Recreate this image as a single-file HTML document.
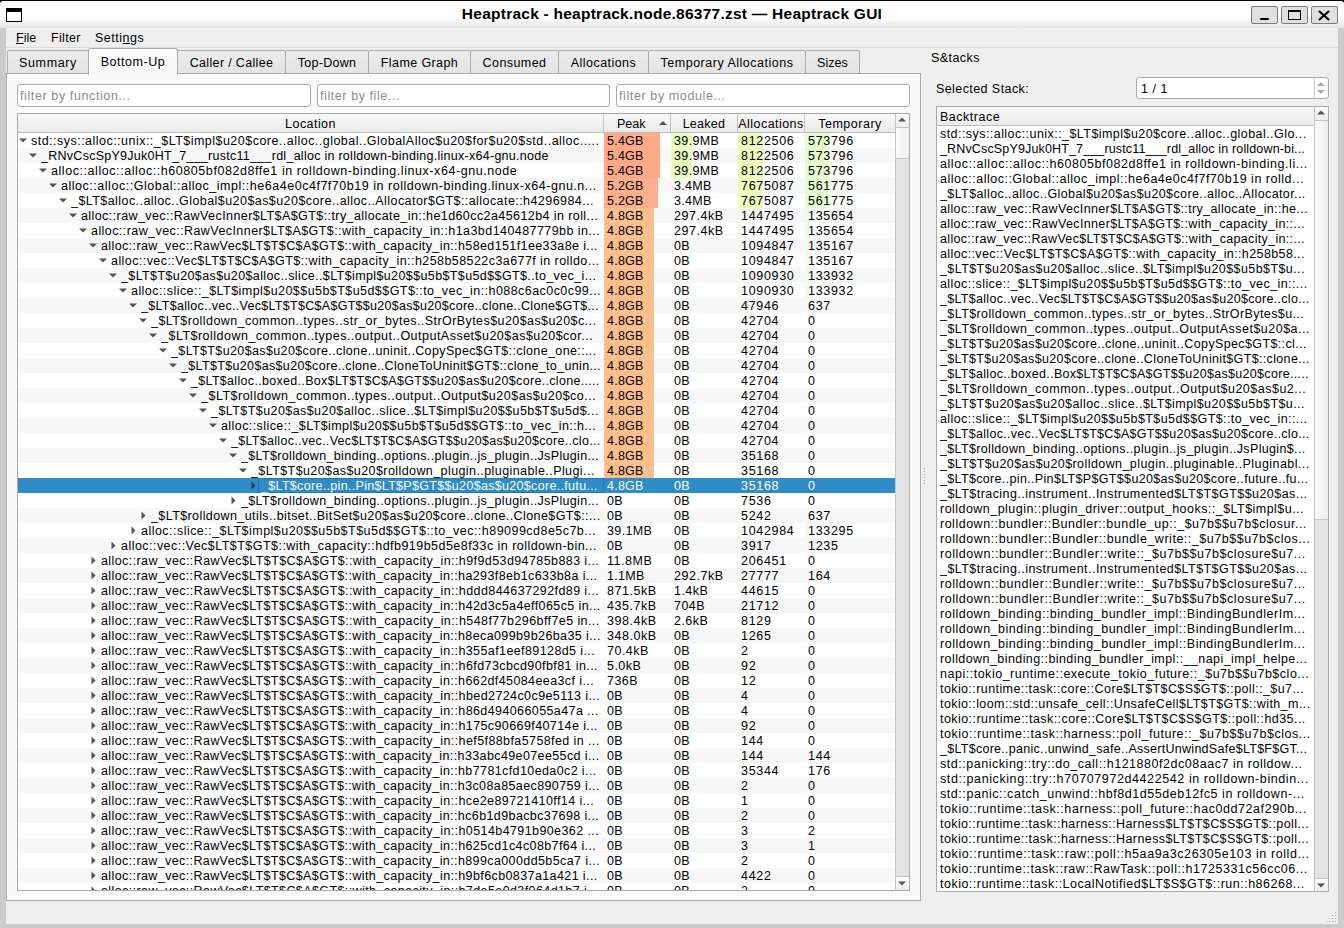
<!DOCTYPE html><html><head><meta charset="utf-8"><style>

*{box-sizing:border-box;margin:0;padding:0}
html,body{width:1344px;height:928px;overflow:hidden;background:#efefef}
body{position:relative;font-family:"Liberation Sans",sans-serif;font-size:12.5px;color:#000}
.a{position:absolute}
.t{position:absolute;white-space:pre;overflow:hidden;line-height:15px;height:15px}

</style></head><body>
<div class="a" style="left:0;top:0;width:1344px;height:6px;background:#000"></div>
<div class="a" style="left:0;top:1px;width:1344px;height:27px;background:linear-gradient(#fff 0,#fff 17px,#e3e3e3 27px);border-radius:3px 3px 0 0"></div>
<div class="a" style="left:6px;top:8px;width:16px;height:14px;border:1px solid #000;border-top-width:4px;background:#fff"></div>
<div class="a" style="left:0;top:5px;width:1344px;text-align:center;font-weight:bold;font-size:15.5px;letter-spacing:0.246px;line-height:17px;white-space:pre">Heaptrack - heaptrack.node.86377.zst — Heaptrack GUI</div>
<div class="a" style="left:1251px;top:6px;width:27px;height:18px;background:#e0e0e0;border:1px solid #7a7a7a;border-radius:2px"></div>
<div class="a" style="left:1281px;top:6px;width:27px;height:18px;background:#e0e0e0;border:1px solid #7a7a7a;border-radius:2px"></div>
<div class="a" style="left:1311px;top:6px;width:27px;height:18px;background:#e0e0e0;border:1px solid #7a7a7a;border-radius:2px"></div>
<div class="a" style="left:1260px;top:18px;width:9px;height:2px;background:#000;border-radius:1px"></div>
<div class="a" style="left:1288px;top:10px;width:13px;height:10px;border:1px solid #000;border-top-width:2px"></div>
<svg class="a" style="left:1318px;top:10px" width="12" height="11" viewBox="0 0 12 11"><path d="M1.5 1.5L10.5 9.5M10.5 1.5L1.5 9.5" stroke="#000" stroke-width="2.1" stroke-linecap="round"/></svg>
<div class="a" style="left:0;top:28px;width:6px;height:900px;background:#cbcbcb"></div>
<div class="a" style="left:1338px;top:28px;width:6px;height:900px;background:#cbcbcb"></div>
<div class="a" style="left:0;top:924px;width:1344px;height:4px;background:#cbcbcb"></div>
<div class="a" style="left:6px;top:47px;width:1332px;height:1px;background:#dadada"></div>
<div class="t" style="left:16px;top:30px;letter-spacing:-0.016px;height:16px;line-height:16px;"><u>F</u>ile</div>
<div class="t" style="left:51px;top:30px;letter-spacing:0.323px;height:16px;line-height:16px;">Filter</div>
<div class="t" style="left:95px;top:30px;letter-spacing:0.506px;height:16px;line-height:16px;">Setti<u>n</u>gs</div>
<div class="a" style="left:6px;top:73px;width:915px;height:828px;border:1px solid #aaa;background:#fafafa;box-shadow:inset 1px 1px 0 #fff"></div>
<div class="a" style="left:7px;top:50px;width:82px;height:24px;border:1px solid #aaa;border-radius:2px 2px 0 0;background:linear-gradient(#ececec,#e4e4e4)"></div>
<div class="t" style="left:7px;top:55px;letter-spacing:0.645px;width:82px;height:16px;line-height:16px;text-align:center;">Summary</div>
<div class="a" style="left:177px;top:50px;width:109px;height:24px;border:1px solid #aaa;border-radius:2px 2px 0 0;background:linear-gradient(#ececec,#e4e4e4)"></div>
<div class="t" style="left:177px;top:55px;letter-spacing:0.336px;width:109px;height:16px;line-height:16px;text-align:center;">Caller / Callee</div>
<div class="a" style="left:285px;top:50px;width:84px;height:24px;border:1px solid #aaa;border-radius:2px 2px 0 0;background:linear-gradient(#ececec,#e4e4e4)"></div>
<div class="t" style="left:285px;top:55px;letter-spacing:0.289px;width:84px;height:16px;line-height:16px;text-align:center;">Top-Down</div>
<div class="a" style="left:368px;top:50px;width:103px;height:24px;border:1px solid #aaa;border-radius:2px 2px 0 0;background:linear-gradient(#ececec,#e4e4e4)"></div>
<div class="t" style="left:368px;top:55px;letter-spacing:0.395px;width:103px;height:16px;line-height:16px;text-align:center;">Flame Graph</div>
<div class="a" style="left:470px;top:50px;width:89px;height:24px;border:1px solid #aaa;border-radius:2px 2px 0 0;background:linear-gradient(#ececec,#e4e4e4)"></div>
<div class="t" style="left:470px;top:55px;letter-spacing:0.428px;width:89px;height:16px;line-height:16px;text-align:center;">Consumed</div>
<div class="a" style="left:558px;top:50px;width:91px;height:24px;border:1px solid #aaa;border-radius:2px 2px 0 0;background:linear-gradient(#ececec,#e4e4e4)"></div>
<div class="t" style="left:558px;top:55px;letter-spacing:0.452px;width:91px;height:16px;line-height:16px;text-align:center;">Allocations</div>
<div class="a" style="left:648px;top:50px;width:158px;height:24px;border:1px solid #aaa;border-radius:2px 2px 0 0;background:linear-gradient(#ececec,#e4e4e4)"></div>
<div class="t" style="left:648px;top:55px;letter-spacing:0.504px;width:158px;height:16px;line-height:16px;text-align:center;">Temporary Allocations</div>
<div class="a" style="left:805px;top:50px;width:55px;height:24px;border:1px solid #aaa;border-radius:2px 2px 0 0;background:linear-gradient(#ececec,#e4e4e4)"></div>
<div class="t" style="left:805px;top:55px;letter-spacing:0.062px;width:55px;height:16px;line-height:16px;text-align:center;">Sizes</div>
<div class="a" style="left:88px;top:48px;width:90px;height:27px;border:1px solid #aaa;border-bottom:none;border-radius:3px 3px 0 0;background:#fafafa;box-shadow:inset 1px 1px 0 #fff"></div>
<div class="t" style="left:88px;top:54px;letter-spacing:0.556px;width:90px;height:16px;line-height:16px;text-align:center;">Bottom-Up</div>
<div class="a" style="left:17px;top:84px;width:294px;height:23px;border:1px solid #aaa;border-radius:3px;background:#fff"></div>
<div class="t" style="left:20px;top:89px;letter-spacing:0.608px;color:#8c8c8c;">filter by function...</div>
<div class="a" style="left:317px;top:84px;width:293px;height:23px;border:1px solid #aaa;border-radius:3px;background:#fff"></div>
<div class="t" style="left:320px;top:89px;letter-spacing:0.577px;color:#8c8c8c;">filter by file...</div>
<div class="a" style="left:616px;top:84px;width:294px;height:23px;border:1px solid #aaa;border-radius:3px;background:#fff"></div>
<div class="t" style="left:619px;top:89px;letter-spacing:0.605px;color:#8c8c8c;">filter by module...</div>
<div class="a" style="left:17px;top:113px;width:893px;height:778px;border:1px solid #aaa;background:#fff;overflow:hidden">
<div class="a" style="left:0;top:0;width:877px;height:19px;background:linear-gradient(#f8f8f8,#eaeaea);border-bottom:1px solid #bdbdbd"></div>
<div class="a" style="left:585px;top:0;width:1px;height:18px;background:#c4c4c4"></div>
<div class="t" style="left:0px;top:3px;letter-spacing:0.438px;width:585px;text-align:center;">Location</div>
<div class="a" style="left:652px;top:0;width:1px;height:18px;background:#c4c4c4"></div>
<div class="t" style="left:599px;top:3px;letter-spacing:0.000px;">Peak</div>
<div class="a" style="left:719px;top:0;width:1px;height:18px;background:#c4c4c4"></div>
<div class="t" style="left:653px;top:3px;letter-spacing:0.286px;width:66px;text-align:center;">Leaked</div>
<div class="a" style="left:786px;top:0;width:1px;height:18px;background:#c4c4c4"></div>
<div class="t" style="left:720px;top:3px;letter-spacing:0.452px;width:66px;text-align:center;">Allocations</div>
<div class="t" style="left:787px;top:3px;letter-spacing:0.512px;width:90px;text-align:center;">Temporary</div>
<svg class="a" style="left:641px;top:7px" width="8" height="4"><path d="M0 4L4 0L8 4Z" fill="#555"/></svg>
<div class="a" style="left:0;top:19px;width:877px;height:15px;background:#fff"></div>
<svg class="a" style="left:1px;top:24px" width="8" height="5"><path d="M0 0.5L8 0.5L4 4.5Z" fill="#555"/></svg>
<div class="t" style="left:13px;top:20px;letter-spacing:0.476px;width:572px;">std::sys::alloc::unix::_$LT$impl$u20$core..alloc..global..GlobalAlloc$u20$for$u20$std..alloc.....</div>
<div class="a" style="left:586px;top:19px;width:56px;height:15px;background:#ffa987"></div>
<div class="a" style="left:653px;top:19px;width:21px;height:15px;background:#e8fcbe"></div>
<div class="a" style="left:720px;top:19px;width:25px;height:15px;background:#eefcbc"></div>
<div class="a" style="left:787px;top:19px;width:25px;height:15px;background:#e6fccc"></div>
<div class="t" style="left:589px;top:20px;letter-spacing:0.237px;">5.4GB</div>
<div class="t" style="left:656px;top:20px;letter-spacing:0.370px;">39.9MB</div>
<div class="t" style="left:723px;top:20px;letter-spacing:0.683px;">8122506</div>
<div class="t" style="left:790px;top:20px;letter-spacing:0.682px;">573796</div>
<div class="a" style="left:0;top:34px;width:877px;height:15px;background:#f7f7f7"></div>
<svg class="a" style="left:11px;top:39px" width="8" height="5"><path d="M0 0.5L8 0.5L4 4.5Z" fill="#555"/></svg>
<div class="t" style="left:23px;top:35px;letter-spacing:0.269px;width:562px;">_RNvCscSpY9Juk0HT_7___rustc11___rdl_alloc in rolldown-binding.linux-x64-gnu.node</div>
<div class="a" style="left:586px;top:34px;width:56px;height:15px;background:#ffa987"></div>
<div class="a" style="left:653px;top:34px;width:21px;height:15px;background:#e8fcbe"></div>
<div class="a" style="left:720px;top:34px;width:25px;height:15px;background:#eefcbc"></div>
<div class="a" style="left:787px;top:34px;width:25px;height:15px;background:#e6fccc"></div>
<div class="t" style="left:589px;top:35px;letter-spacing:0.237px;">5.4GB</div>
<div class="t" style="left:656px;top:35px;letter-spacing:0.370px;">39.9MB</div>
<div class="t" style="left:723px;top:35px;letter-spacing:0.683px;">8122506</div>
<div class="t" style="left:790px;top:35px;letter-spacing:0.682px;">573796</div>
<div class="a" style="left:0;top:49px;width:877px;height:15px;background:#fff"></div>
<svg class="a" style="left:21px;top:54px" width="8" height="5"><path d="M0 0.5L8 0.5L4 4.5Z" fill="#555"/></svg>
<div class="t" style="left:33px;top:50px;letter-spacing:0.563px;width:552px;">alloc::alloc::alloc::h60805bf082d8ffe1 in rolldown-binding.linux-x64-gnu.node</div>
<div class="a" style="left:586px;top:49px;width:56px;height:15px;background:#ffa987"></div>
<div class="a" style="left:653px;top:49px;width:21px;height:15px;background:#e8fcbe"></div>
<div class="a" style="left:720px;top:49px;width:25px;height:15px;background:#eefcbc"></div>
<div class="a" style="left:787px;top:49px;width:25px;height:15px;background:#e6fccc"></div>
<div class="t" style="left:589px;top:50px;letter-spacing:0.237px;">5.4GB</div>
<div class="t" style="left:656px;top:50px;letter-spacing:0.370px;">39.9MB</div>
<div class="t" style="left:723px;top:50px;letter-spacing:0.683px;">8122506</div>
<div class="t" style="left:790px;top:50px;letter-spacing:0.682px;">573796</div>
<div class="a" style="left:0;top:64px;width:877px;height:15px;background:#f7f7f7"></div>
<svg class="a" style="left:31px;top:69px" width="8" height="5"><path d="M0 0.5L8 0.5L4 4.5Z" fill="#555"/></svg>
<div class="t" style="left:43px;top:65px;letter-spacing:0.526px;width:542px;">alloc::alloc::Global::alloc_impl::he6a4e0c4f7f70b19 in rolldown-binding.linux-x64-gnu.n...</div>
<div class="a" style="left:586px;top:64px;width:54px;height:15px;background:#fdaf8b"></div>
<div class="a" style="left:720px;top:64px;width:24px;height:15px;background:#eefcbc"></div>
<div class="a" style="left:787px;top:64px;width:24px;height:15px;background:#e6fccc"></div>
<div class="t" style="left:589px;top:65px;letter-spacing:0.237px;">5.2GB</div>
<div class="t" style="left:656px;top:65px;letter-spacing:0.306px;">3.4MB</div>
<div class="t" style="left:723px;top:65px;letter-spacing:0.683px;">7675087</div>
<div class="t" style="left:790px;top:65px;letter-spacing:0.682px;">561775</div>
<div class="a" style="left:0;top:79px;width:877px;height:15px;background:#fff"></div>
<svg class="a" style="left:41px;top:84px" width="8" height="5"><path d="M0 0.5L8 0.5L4 4.5Z" fill="#555"/></svg>
<div class="t" style="left:53px;top:80px;letter-spacing:0.435px;width:532px;">_$LT$alloc..alloc..Global$u20$as$u20$core..alloc..Allocator$GT$::allocate::h4296984...</div>
<div class="a" style="left:586px;top:79px;width:54px;height:15px;background:#fdaf8b"></div>
<div class="a" style="left:720px;top:79px;width:24px;height:15px;background:#eefcbc"></div>
<div class="a" style="left:787px;top:79px;width:24px;height:15px;background:#e6fccc"></div>
<div class="t" style="left:589px;top:80px;letter-spacing:0.237px;">5.2GB</div>
<div class="t" style="left:656px;top:80px;letter-spacing:0.306px;">3.4MB</div>
<div class="t" style="left:723px;top:80px;letter-spacing:0.683px;">7675087</div>
<div class="t" style="left:790px;top:80px;letter-spacing:0.682px;">561775</div>
<div class="a" style="left:0;top:94px;width:877px;height:15px;background:#f7f7f7"></div>
<svg class="a" style="left:51px;top:99px" width="8" height="5"><path d="M0 0.5L8 0.5L4 4.5Z" fill="#555"/></svg>
<div class="t" style="left:63px;top:95px;letter-spacing:0.416px;width:522px;">alloc::raw_vec::RawVecInner$LT$A$GT$::try_allocate_in::he1d60cc2a45612b4 in roll...</div>
<div class="a" style="left:586px;top:94px;width:50px;height:15px;background:#fdbf8c"></div>
<div class="a" style="left:720px;top:94px;width:4px;height:15px;background:#f3fbe8"></div>
<div class="a" style="left:787px;top:94px;width:4px;height:15px;background:#eefbe8"></div>
<div class="t" style="left:589px;top:95px;letter-spacing:0.237px;">4.8GB</div>
<div class="t" style="left:656px;top:95px;letter-spacing:0.525px;">297.4kB</div>
<div class="t" style="left:723px;top:95px;letter-spacing:0.683px;">1447495</div>
<div class="t" style="left:790px;top:95px;letter-spacing:0.682px;">135654</div>
<div class="a" style="left:0;top:109px;width:877px;height:15px;background:#fff"></div>
<svg class="a" style="left:61px;top:114px" width="8" height="5"><path d="M0 0.5L8 0.5L4 4.5Z" fill="#555"/></svg>
<div class="t" style="left:73px;top:110px;letter-spacing:0.430px;width:512px;">alloc::raw_vec::RawVecInner$LT$A$GT$::with_capacity_in::h1a3bd140487779bb in...</div>
<div class="a" style="left:586px;top:109px;width:50px;height:15px;background:#fdbf8c"></div>
<div class="a" style="left:720px;top:109px;width:4px;height:15px;background:#f3fbe8"></div>
<div class="a" style="left:787px;top:109px;width:4px;height:15px;background:#eefbe8"></div>
<div class="t" style="left:589px;top:110px;letter-spacing:0.237px;">4.8GB</div>
<div class="t" style="left:656px;top:110px;letter-spacing:0.525px;">297.4kB</div>
<div class="t" style="left:723px;top:110px;letter-spacing:0.683px;">1447495</div>
<div class="t" style="left:790px;top:110px;letter-spacing:0.682px;">135654</div>
<div class="a" style="left:0;top:124px;width:877px;height:15px;background:#f7f7f7"></div>
<svg class="a" style="left:71px;top:129px" width="8" height="5"><path d="M0 0.5L8 0.5L4 4.5Z" fill="#555"/></svg>
<div class="t" style="left:83px;top:125px;letter-spacing:0.393px;width:502px;">alloc::raw_vec::RawVec$LT$T$C$A$GT$::with_capacity_in::h58ed151f1ee33a8e i...</div>
<div class="a" style="left:586px;top:124px;width:50px;height:15px;background:#fdbf8c"></div>
<div class="a" style="left:720px;top:124px;width:3px;height:15px;background:#f3fbec"></div>
<div class="a" style="left:787px;top:124px;width:3px;height:15px;background:#f0fbec"></div>
<div class="t" style="left:589px;top:125px;letter-spacing:0.237px;">4.8GB</div>
<div class="t" style="left:656px;top:125px;letter-spacing:0.289px;">0B</div>
<div class="t" style="left:723px;top:125px;letter-spacing:0.683px;">1094847</div>
<div class="t" style="left:790px;top:125px;letter-spacing:0.682px;">135167</div>
<div class="a" style="left:0;top:139px;width:877px;height:15px;background:#fff"></div>
<svg class="a" style="left:81px;top:144px" width="8" height="5"><path d="M0 0.5L8 0.5L4 4.5Z" fill="#555"/></svg>
<div class="t" style="left:93px;top:140px;letter-spacing:0.430px;width:492px;">alloc::vec::Vec$LT$T$C$A$GT$::with_capacity_in::h258b58522c3a677f in rolldo...</div>
<div class="a" style="left:586px;top:139px;width:50px;height:15px;background:#fdbf8c"></div>
<div class="a" style="left:720px;top:139px;width:3px;height:15px;background:#f3fbec"></div>
<div class="a" style="left:787px;top:139px;width:3px;height:15px;background:#f0fbec"></div>
<div class="t" style="left:589px;top:140px;letter-spacing:0.237px;">4.8GB</div>
<div class="t" style="left:656px;top:140px;letter-spacing:0.289px;">0B</div>
<div class="t" style="left:723px;top:140px;letter-spacing:0.683px;">1094847</div>
<div class="t" style="left:790px;top:140px;letter-spacing:0.682px;">135167</div>
<div class="a" style="left:0;top:154px;width:877px;height:15px;background:#f7f7f7"></div>
<svg class="a" style="left:91px;top:159px" width="8" height="5"><path d="M0 0.5L8 0.5L4 4.5Z" fill="#555"/></svg>
<div class="t" style="left:103px;top:155px;letter-spacing:0.387px;width:482px;">_$LT$T$u20$as$u20$alloc..slice..$LT$impl$u20$$u5b$T$u5d$$GT$..to_vec_i...</div>
<div class="a" style="left:586px;top:154px;width:50px;height:15px;background:#fdbf8c"></div>
<div class="a" style="left:720px;top:154px;width:3px;height:15px;background:#f3fbec"></div>
<div class="a" style="left:787px;top:154px;width:3px;height:15px;background:#f0fbec"></div>
<div class="t" style="left:589px;top:155px;letter-spacing:0.237px;">4.8GB</div>
<div class="t" style="left:656px;top:155px;letter-spacing:0.289px;">0B</div>
<div class="t" style="left:723px;top:155px;letter-spacing:0.683px;">1090930</div>
<div class="t" style="left:790px;top:155px;letter-spacing:0.682px;">133932</div>
<div class="a" style="left:0;top:169px;width:877px;height:15px;background:#fff"></div>
<svg class="a" style="left:101px;top:174px" width="8" height="5"><path d="M0 0.5L8 0.5L4 4.5Z" fill="#555"/></svg>
<div class="t" style="left:113px;top:170px;letter-spacing:0.444px;width:472px;">alloc::slice::_$LT$impl$u20$$u5b$T$u5d$$GT$::to_vec_in::h088c6ac0c0c99...</div>
<div class="a" style="left:586px;top:169px;width:50px;height:15px;background:#fdbf8c"></div>
<div class="a" style="left:720px;top:169px;width:3px;height:15px;background:#f3fbec"></div>
<div class="a" style="left:787px;top:169px;width:3px;height:15px;background:#f0fbec"></div>
<div class="t" style="left:589px;top:170px;letter-spacing:0.237px;">4.8GB</div>
<div class="t" style="left:656px;top:170px;letter-spacing:0.289px;">0B</div>
<div class="t" style="left:723px;top:170px;letter-spacing:0.683px;">1090930</div>
<div class="t" style="left:790px;top:170px;letter-spacing:0.682px;">133932</div>
<div class="a" style="left:0;top:184px;width:877px;height:15px;background:#f7f7f7"></div>
<svg class="a" style="left:111px;top:189px" width="8" height="5"><path d="M0 0.5L8 0.5L4 4.5Z" fill="#555"/></svg>
<div class="t" style="left:123px;top:185px;letter-spacing:0.294px;width:462px;">_$LT$alloc..vec..Vec$LT$T$C$A$GT$$u20$as$u20$core..clone..Clone$GT$...</div>
<div class="a" style="left:586px;top:184px;width:50px;height:15px;background:#fdbf8c"></div>
<div class="t" style="left:589px;top:185px;letter-spacing:0.237px;">4.8GB</div>
<div class="t" style="left:656px;top:185px;letter-spacing:0.289px;">0B</div>
<div class="t" style="left:723px;top:185px;letter-spacing:0.684px;">47946</div>
<div class="t" style="left:790px;top:185px;letter-spacing:0.682px;">637</div>
<div class="a" style="left:0;top:199px;width:877px;height:15px;background:#fff"></div>
<svg class="a" style="left:121px;top:204px" width="8" height="5"><path d="M0 0.5L8 0.5L4 4.5Z" fill="#555"/></svg>
<div class="t" style="left:133px;top:200px;letter-spacing:0.426px;width:452px;">_$LT$rolldown_common..types..str_or_bytes..StrOrBytes$u20$as$u20$c...</div>
<div class="a" style="left:586px;top:199px;width:50px;height:15px;background:#fdbf8c"></div>
<div class="t" style="left:589px;top:200px;letter-spacing:0.237px;">4.8GB</div>
<div class="t" style="left:656px;top:200px;letter-spacing:0.289px;">0B</div>
<div class="t" style="left:723px;top:200px;letter-spacing:0.684px;">42704</div>
<div class="t" style="left:790px;top:200px;letter-spacing:0.688px;">0</div>
<div class="a" style="left:0;top:214px;width:877px;height:15px;background:#f7f7f7"></div>
<svg class="a" style="left:131px;top:219px" width="8" height="5"><path d="M0 0.5L8 0.5L4 4.5Z" fill="#555"/></svg>
<div class="t" style="left:143px;top:215px;letter-spacing:0.486px;width:442px;">_$LT$rolldown_common..types..output..OutputAsset$u20$as$u20$cor...</div>
<div class="a" style="left:586px;top:214px;width:50px;height:15px;background:#fdbf8c"></div>
<div class="t" style="left:589px;top:215px;letter-spacing:0.237px;">4.8GB</div>
<div class="t" style="left:656px;top:215px;letter-spacing:0.289px;">0B</div>
<div class="t" style="left:723px;top:215px;letter-spacing:0.684px;">42704</div>
<div class="t" style="left:790px;top:215px;letter-spacing:0.688px;">0</div>
<div class="a" style="left:0;top:229px;width:877px;height:15px;background:#fff"></div>
<svg class="a" style="left:141px;top:234px" width="8" height="5"><path d="M0 0.5L8 0.5L4 4.5Z" fill="#555"/></svg>
<div class="t" style="left:153px;top:230px;letter-spacing:0.370px;width:432px;">_$LT$T$u20$as$u20$core..clone..uninit..CopySpec$GT$::clone_one::...</div>
<div class="a" style="left:586px;top:229px;width:50px;height:15px;background:#fdbf8c"></div>
<div class="t" style="left:589px;top:230px;letter-spacing:0.237px;">4.8GB</div>
<div class="t" style="left:656px;top:230px;letter-spacing:0.289px;">0B</div>
<div class="t" style="left:723px;top:230px;letter-spacing:0.684px;">42704</div>
<div class="t" style="left:790px;top:230px;letter-spacing:0.688px;">0</div>
<div class="a" style="left:0;top:244px;width:877px;height:15px;background:#f7f7f7"></div>
<svg class="a" style="left:151px;top:249px" width="8" height="5"><path d="M0 0.5L8 0.5L4 4.5Z" fill="#555"/></svg>
<div class="t" style="left:163px;top:245px;letter-spacing:0.343px;width:422px;">_$LT$T$u20$as$u20$core..clone..CloneToUninit$GT$::clone_to_unin...</div>
<div class="a" style="left:586px;top:244px;width:50px;height:15px;background:#fdbf8c"></div>
<div class="t" style="left:589px;top:245px;letter-spacing:0.237px;">4.8GB</div>
<div class="t" style="left:656px;top:245px;letter-spacing:0.289px;">0B</div>
<div class="t" style="left:723px;top:245px;letter-spacing:0.684px;">42704</div>
<div class="t" style="left:790px;top:245px;letter-spacing:0.688px;">0</div>
<div class="a" style="left:0;top:259px;width:877px;height:15px;background:#fff"></div>
<svg class="a" style="left:161px;top:264px" width="8" height="5"><path d="M0 0.5L8 0.5L4 4.5Z" fill="#555"/></svg>
<div class="t" style="left:173px;top:260px;letter-spacing:0.317px;width:412px;">_$LT$alloc..boxed..Box$LT$T$C$A$GT$$u20$as$u20$core..clone.....</div>
<div class="a" style="left:586px;top:259px;width:50px;height:15px;background:#fdbf8c"></div>
<div class="t" style="left:589px;top:260px;letter-spacing:0.237px;">4.8GB</div>
<div class="t" style="left:656px;top:260px;letter-spacing:0.289px;">0B</div>
<div class="t" style="left:723px;top:260px;letter-spacing:0.684px;">42704</div>
<div class="t" style="left:790px;top:260px;letter-spacing:0.688px;">0</div>
<div class="a" style="left:0;top:274px;width:877px;height:15px;background:#f7f7f7"></div>
<svg class="a" style="left:171px;top:279px" width="8" height="5"><path d="M0 0.5L8 0.5L4 4.5Z" fill="#555"/></svg>
<div class="t" style="left:183px;top:275px;letter-spacing:0.499px;width:402px;">_$LT$rolldown_common..types..output..Output$u20$as$u20$co...</div>
<div class="a" style="left:586px;top:274px;width:50px;height:15px;background:#fdbf8c"></div>
<div class="t" style="left:589px;top:275px;letter-spacing:0.237px;">4.8GB</div>
<div class="t" style="left:656px;top:275px;letter-spacing:0.289px;">0B</div>
<div class="t" style="left:723px;top:275px;letter-spacing:0.684px;">42704</div>
<div class="t" style="left:790px;top:275px;letter-spacing:0.688px;">0</div>
<div class="a" style="left:0;top:289px;width:877px;height:15px;background:#fff"></div>
<svg class="a" style="left:181px;top:294px" width="8" height="5"><path d="M0 0.5L8 0.5L4 4.5Z" fill="#555"/></svg>
<div class="t" style="left:193px;top:290px;letter-spacing:0.432px;width:392px;">_$LT$T$u20$as$u20$alloc..slice..$LT$impl$u20$$u5b$T$u5d$...</div>
<div class="a" style="left:586px;top:289px;width:50px;height:15px;background:#fdbf8c"></div>
<div class="t" style="left:589px;top:290px;letter-spacing:0.237px;">4.8GB</div>
<div class="t" style="left:656px;top:290px;letter-spacing:0.289px;">0B</div>
<div class="t" style="left:723px;top:290px;letter-spacing:0.684px;">42704</div>
<div class="t" style="left:790px;top:290px;letter-spacing:0.688px;">0</div>
<div class="a" style="left:0;top:304px;width:877px;height:15px;background:#f7f7f7"></div>
<svg class="a" style="left:191px;top:309px" width="8" height="5"><path d="M0 0.5L8 0.5L4 4.5Z" fill="#555"/></svg>
<div class="t" style="left:203px;top:305px;letter-spacing:0.419px;width:382px;">alloc::slice::_$LT$impl$u20$$u5b$T$u5d$$GT$::to_vec_in::h...</div>
<div class="a" style="left:586px;top:304px;width:50px;height:15px;background:#fdbf8c"></div>
<div class="t" style="left:589px;top:305px;letter-spacing:0.237px;">4.8GB</div>
<div class="t" style="left:656px;top:305px;letter-spacing:0.289px;">0B</div>
<div class="t" style="left:723px;top:305px;letter-spacing:0.684px;">42704</div>
<div class="t" style="left:790px;top:305px;letter-spacing:0.688px;">0</div>
<div class="a" style="left:0;top:319px;width:877px;height:15px;background:#fff"></div>
<svg class="a" style="left:201px;top:324px" width="8" height="5"><path d="M0 0.5L8 0.5L4 4.5Z" fill="#555"/></svg>
<div class="t" style="left:213px;top:320px;letter-spacing:0.298px;width:372px;">_$LT$alloc..vec..Vec$LT$T$C$A$GT$$u20$as$u20$core..clo...</div>
<div class="a" style="left:586px;top:319px;width:50px;height:15px;background:#fdbf8c"></div>
<div class="t" style="left:589px;top:320px;letter-spacing:0.237px;">4.8GB</div>
<div class="t" style="left:656px;top:320px;letter-spacing:0.289px;">0B</div>
<div class="t" style="left:723px;top:320px;letter-spacing:0.684px;">42704</div>
<div class="t" style="left:790px;top:320px;letter-spacing:0.688px;">0</div>
<div class="a" style="left:0;top:334px;width:877px;height:15px;background:#f7f7f7"></div>
<svg class="a" style="left:211px;top:339px" width="8" height="5"><path d="M0 0.5L8 0.5L4 4.5Z" fill="#555"/></svg>
<div class="t" style="left:223px;top:335px;letter-spacing:0.341px;width:362px;">_$LT$rolldown_binding..options..plugin..js_plugin..JsPlugin...</div>
<div class="a" style="left:586px;top:334px;width:50px;height:15px;background:#fdbf8c"></div>
<div class="t" style="left:589px;top:335px;letter-spacing:0.237px;">4.8GB</div>
<div class="t" style="left:656px;top:335px;letter-spacing:0.289px;">0B</div>
<div class="t" style="left:723px;top:335px;letter-spacing:0.684px;">35168</div>
<div class="t" style="left:790px;top:335px;letter-spacing:0.688px;">0</div>
<div class="a" style="left:0;top:349px;width:877px;height:15px;background:#fff"></div>
<svg class="a" style="left:221px;top:354px" width="8" height="5"><path d="M0 0.5L8 0.5L4 4.5Z" fill="#555"/></svg>
<div class="t" style="left:233px;top:350px;letter-spacing:0.415px;width:352px;">_$LT$T$u20$as$u20$rolldown_plugin..pluginable..Plugi...</div>
<div class="a" style="left:586px;top:349px;width:50px;height:15px;background:#fdbf8c"></div>
<div class="t" style="left:589px;top:350px;letter-spacing:0.237px;">4.8GB</div>
<div class="t" style="left:656px;top:350px;letter-spacing:0.289px;">0B</div>
<div class="t" style="left:723px;top:350px;letter-spacing:0.684px;">35168</div>
<div class="t" style="left:790px;top:350px;letter-spacing:0.688px;">0</div>
<div class="a" style="left:0;top:364px;width:877px;height:15px;background:#308cc6"></div>
<svg class="a" style="left:233px;top:367px" width="5" height="9"><path d="M0.5 0.5L4.5 4.5L0.5 8.5Z" fill="#1d3f57"/></svg>
<div class="t" style="left:243px;top:365px;letter-spacing:0.319px;width:342px;color:#fff;">_$LT$core..pin..Pin$LT$P$GT$$u20$as$u20$core..futu...</div>
<div class="a" style="left:240px;top:364px;width:346px;height:15px;border:1px solid rgba(0,40,80,0.22)"></div>
<div class="t" style="left:589px;top:365px;letter-spacing:0.237px;color:#fff;">4.8GB</div>
<div class="t" style="left:656px;top:365px;letter-spacing:0.289px;color:#fff;">0B</div>
<div class="t" style="left:723px;top:365px;letter-spacing:0.684px;color:#fff;">35168</div>
<div class="t" style="left:790px;top:365px;letter-spacing:0.688px;color:#fff;">0</div>
<div class="a" style="left:0;top:379px;width:877px;height:15px;background:#fff"></div>
<svg class="a" style="left:213px;top:382px" width="5" height="9"><path d="M0.5 0.5L4.5 4.5L0.5 8.5Z" fill="#555"/></svg>
<div class="t" style="left:223px;top:380px;letter-spacing:0.341px;width:362px;">_$LT$rolldown_binding..options..plugin..js_plugin..JsPlugin...</div>
<div class="t" style="left:589px;top:380px;letter-spacing:0.289px;">0B</div>
<div class="t" style="left:656px;top:380px;letter-spacing:0.289px;">0B</div>
<div class="t" style="left:723px;top:380px;letter-spacing:0.684px;">7536</div>
<div class="t" style="left:790px;top:380px;letter-spacing:0.688px;">0</div>
<div class="a" style="left:0;top:394px;width:877px;height:15px;background:#f7f7f7"></div>
<svg class="a" style="left:123px;top:397px" width="5" height="9"><path d="M0.5 0.5L4.5 4.5L0.5 8.5Z" fill="#555"/></svg>
<div class="t" style="left:133px;top:395px;letter-spacing:0.407px;width:452px;">_$LT$rolldown_utils..bitset..BitSet$u20$as$u20$core..clone..Clone$GT$::...</div>
<div class="t" style="left:589px;top:395px;letter-spacing:0.289px;">0B</div>
<div class="t" style="left:656px;top:395px;letter-spacing:0.289px;">0B</div>
<div class="t" style="left:723px;top:395px;letter-spacing:0.684px;">5242</div>
<div class="t" style="left:790px;top:395px;letter-spacing:0.682px;">637</div>
<div class="a" style="left:0;top:409px;width:877px;height:15px;background:#fff"></div>
<svg class="a" style="left:113px;top:412px" width="5" height="9"><path d="M0.5 0.5L4.5 4.5L0.5 8.5Z" fill="#555"/></svg>
<div class="t" style="left:123px;top:410px;letter-spacing:0.469px;width:462px;">alloc::slice::_$LT$impl$u20$$u5b$T$u5d$$GT$::to_vec::h89099cd8e5c7b...</div>
<div class="a" style="left:720px;top:409px;width:3px;height:15px;background:#f3fbec"></div>
<div class="a" style="left:787px;top:409px;width:3px;height:15px;background:#f0fbec"></div>
<div class="t" style="left:589px;top:410px;letter-spacing:0.370px;">39.1MB</div>
<div class="t" style="left:656px;top:410px;letter-spacing:0.289px;">0B</div>
<div class="t" style="left:723px;top:410px;letter-spacing:0.683px;">1042984</div>
<div class="t" style="left:790px;top:410px;letter-spacing:0.682px;">133295</div>
<div class="a" style="left:0;top:424px;width:877px;height:15px;background:#f7f7f7"></div>
<svg class="a" style="left:93px;top:427px" width="5" height="9"><path d="M0.5 0.5L4.5 4.5L0.5 8.5Z" fill="#555"/></svg>
<div class="t" style="left:103px;top:425px;letter-spacing:0.462px;width:482px;">alloc::vec::Vec$LT$T$GT$::with_capacity::hdfb919b5d5e8f33c in rolldown-bin...</div>
<div class="t" style="left:589px;top:425px;letter-spacing:0.289px;">0B</div>
<div class="t" style="left:656px;top:425px;letter-spacing:0.289px;">0B</div>
<div class="t" style="left:723px;top:425px;letter-spacing:0.684px;">3917</div>
<div class="t" style="left:790px;top:425px;letter-spacing:0.684px;">1235</div>
<div class="a" style="left:0;top:439px;width:877px;height:15px;background:#fff"></div>
<svg class="a" style="left:73px;top:442px" width="5" height="9"><path d="M0.5 0.5L4.5 4.5L0.5 8.5Z" fill="#555"/></svg>
<div class="t" style="left:83px;top:440px;letter-spacing:0.409px;width:502px;">alloc::raw_vec::RawVec$LT$T$C$A$GT$::with_capacity_in::h9f9d53d94785b883 i...</div>
<div class="t" style="left:589px;top:440px;letter-spacing:0.526px;">11.8MB</div>
<div class="t" style="left:656px;top:440px;letter-spacing:0.289px;">0B</div>
<div class="t" style="left:723px;top:440px;letter-spacing:0.682px;">206451</div>
<div class="t" style="left:790px;top:440px;letter-spacing:0.688px;">0</div>
<div class="a" style="left:0;top:454px;width:877px;height:15px;background:#f7f7f7"></div>
<svg class="a" style="left:73px;top:457px" width="5" height="9"><path d="M0.5 0.5L4.5 4.5L0.5 8.5Z" fill="#555"/></svg>
<div class="t" style="left:83px;top:455px;letter-spacing:0.395px;width:502px;">alloc::raw_vec::RawVec$LT$T$C$A$GT$::with_capacity_in::ha293f8eb1c633b8a i...</div>
<div class="t" style="left:589px;top:455px;letter-spacing:0.306px;">1.1MB</div>
<div class="t" style="left:656px;top:455px;letter-spacing:0.525px;">292.7kB</div>
<div class="t" style="left:723px;top:455px;letter-spacing:0.684px;">27777</div>
<div class="t" style="left:790px;top:455px;letter-spacing:0.682px;">164</div>
<div class="a" style="left:0;top:469px;width:877px;height:15px;background:#fff"></div>
<svg class="a" style="left:73px;top:472px" width="5" height="9"><path d="M0.5 0.5L4.5 4.5L0.5 8.5Z" fill="#555"/></svg>
<div class="t" style="left:83px;top:470px;letter-spacing:0.409px;width:502px;">alloc::raw_vec::RawVec$LT$T$C$A$GT$::with_capacity_in::hddd844637292fd89 i...</div>
<div class="t" style="left:589px;top:470px;letter-spacing:0.525px;">871.5kB</div>
<div class="t" style="left:656px;top:470px;letter-spacing:0.459px;">1.4kB</div>
<div class="t" style="left:723px;top:470px;letter-spacing:0.684px;">44615</div>
<div class="t" style="left:790px;top:470px;letter-spacing:0.688px;">0</div>
<div class="a" style="left:0;top:484px;width:877px;height:15px;background:#f7f7f7"></div>
<svg class="a" style="left:73px;top:487px" width="5" height="9"><path d="M0.5 0.5L4.5 4.5L0.5 8.5Z" fill="#555"/></svg>
<div class="t" style="left:83px;top:485px;letter-spacing:0.399px;width:502px;">alloc::raw_vec::RawVec$LT$T$C$A$GT$::with_capacity_in::h42d3c5a4eff065c5 in...</div>
<div class="t" style="left:589px;top:485px;letter-spacing:0.525px;">435.7kB</div>
<div class="t" style="left:656px;top:485px;letter-spacing:0.484px;">704B</div>
<div class="t" style="left:723px;top:485px;letter-spacing:0.684px;">21712</div>
<div class="t" style="left:790px;top:485px;letter-spacing:0.688px;">0</div>
<div class="a" style="left:0;top:499px;width:877px;height:15px;background:#fff"></div>
<svg class="a" style="left:73px;top:502px" width="5" height="9"><path d="M0.5 0.5L4.5 4.5L0.5 8.5Z" fill="#555"/></svg>
<div class="t" style="left:83px;top:500px;letter-spacing:0.412px;width:502px;">alloc::raw_vec::RawVec$LT$T$C$A$GT$::with_capacity_in::h548f77b296bff7e5 in...</div>
<div class="t" style="left:589px;top:500px;letter-spacing:0.525px;">398.4kB</div>
<div class="t" style="left:656px;top:500px;letter-spacing:0.459px;">2.6kB</div>
<div class="t" style="left:723px;top:500px;letter-spacing:0.684px;">8129</div>
<div class="t" style="left:790px;top:500px;letter-spacing:0.688px;">0</div>
<div class="a" style="left:0;top:514px;width:877px;height:15px;background:#f7f7f7"></div>
<svg class="a" style="left:73px;top:517px" width="5" height="9"><path d="M0.5 0.5L4.5 4.5L0.5 8.5Z" fill="#555"/></svg>
<div class="t" style="left:83px;top:515px;letter-spacing:0.393px;width:502px;">alloc::raw_vec::RawVec$LT$T$C$A$GT$::with_capacity_in::h8eca099b9b26ba35 i...</div>
<div class="t" style="left:589px;top:515px;letter-spacing:0.525px;">348.0kB</div>
<div class="t" style="left:656px;top:515px;letter-spacing:0.289px;">0B</div>
<div class="t" style="left:723px;top:515px;letter-spacing:0.684px;">1265</div>
<div class="t" style="left:790px;top:515px;letter-spacing:0.688px;">0</div>
<div class="a" style="left:0;top:529px;width:877px;height:15px;background:#fff"></div>
<svg class="a" style="left:73px;top:532px" width="5" height="9"><path d="M0.5 0.5L4.5 4.5L0.5 8.5Z" fill="#555"/></svg>
<div class="t" style="left:83px;top:530px;letter-spacing:0.401px;width:502px;">alloc::raw_vec::RawVec$LT$T$C$A$GT$::with_capacity_in::h355af1eef89128d5 i...</div>
<div class="t" style="left:589px;top:530px;letter-spacing:0.497px;">70.4kB</div>
<div class="t" style="left:656px;top:530px;letter-spacing:0.289px;">0B</div>
<div class="t" style="left:723px;top:530px;letter-spacing:0.688px;">2</div>
<div class="t" style="left:790px;top:530px;letter-spacing:0.688px;">0</div>
<div class="a" style="left:0;top:544px;width:877px;height:15px;background:#f7f7f7"></div>
<svg class="a" style="left:73px;top:547px" width="5" height="9"><path d="M0.5 0.5L4.5 4.5L0.5 8.5Z" fill="#555"/></svg>
<div class="t" style="left:83px;top:545px;letter-spacing:0.405px;width:502px;">alloc::raw_vec::RawVec$LT$T$C$A$GT$::with_capacity_in::h6fd73cbcd90fbf81 in...</div>
<div class="t" style="left:589px;top:545px;letter-spacing:0.459px;">5.0kB</div>
<div class="t" style="left:656px;top:545px;letter-spacing:0.289px;">0B</div>
<div class="t" style="left:723px;top:545px;letter-spacing:0.688px;">92</div>
<div class="t" style="left:790px;top:545px;letter-spacing:0.688px;">0</div>
<div class="a" style="left:0;top:559px;width:877px;height:15px;background:#fff"></div>
<svg class="a" style="left:73px;top:562px" width="5" height="9"><path d="M0.5 0.5L4.5 4.5L0.5 8.5Z" fill="#555"/></svg>
<div class="t" style="left:83px;top:560px;letter-spacing:0.396px;width:502px;">alloc::raw_vec::RawVec$LT$T$C$A$GT$::with_capacity_in::h662df45084eea3cf i...</div>
<div class="t" style="left:589px;top:560px;letter-spacing:0.484px;">736B</div>
<div class="t" style="left:656px;top:560px;letter-spacing:0.289px;">0B</div>
<div class="t" style="left:723px;top:560px;letter-spacing:0.688px;">12</div>
<div class="t" style="left:790px;top:560px;letter-spacing:0.688px;">0</div>
<div class="a" style="left:0;top:574px;width:877px;height:15px;background:#f7f7f7"></div>
<svg class="a" style="left:73px;top:577px" width="5" height="9"><path d="M0.5 0.5L4.5 4.5L0.5 8.5Z" fill="#555"/></svg>
<div class="t" style="left:83px;top:575px;letter-spacing:0.405px;width:502px;">alloc::raw_vec::RawVec$LT$T$C$A$GT$::with_capacity_in::hbed2724c0c9e5113 i...</div>
<div class="t" style="left:589px;top:575px;letter-spacing:0.289px;">0B</div>
<div class="t" style="left:656px;top:575px;letter-spacing:0.289px;">0B</div>
<div class="t" style="left:723px;top:575px;letter-spacing:0.688px;">4</div>
<div class="t" style="left:790px;top:575px;letter-spacing:0.688px;">0</div>
<div class="a" style="left:0;top:589px;width:877px;height:15px;background:#fff"></div>
<svg class="a" style="left:73px;top:592px" width="5" height="9"><path d="M0.5 0.5L4.5 4.5L0.5 8.5Z" fill="#555"/></svg>
<div class="t" style="left:83px;top:590px;letter-spacing:0.399px;width:502px;">alloc::raw_vec::RawVec$LT$T$C$A$GT$::with_capacity_in::h86d494066055a47a ...</div>
<div class="t" style="left:589px;top:590px;letter-spacing:0.289px;">0B</div>
<div class="t" style="left:656px;top:590px;letter-spacing:0.289px;">0B</div>
<div class="t" style="left:723px;top:590px;letter-spacing:0.688px;">4</div>
<div class="t" style="left:790px;top:590px;letter-spacing:0.688px;">0</div>
<div class="a" style="left:0;top:604px;width:877px;height:15px;background:#f7f7f7"></div>
<svg class="a" style="left:73px;top:607px" width="5" height="9"><path d="M0.5 0.5L4.5 4.5L0.5 8.5Z" fill="#555"/></svg>
<div class="t" style="left:83px;top:605px;letter-spacing:0.402px;width:502px;">alloc::raw_vec::RawVec$LT$T$C$A$GT$::with_capacity_in::h175c90669f40714e i...</div>
<div class="t" style="left:589px;top:605px;letter-spacing:0.289px;">0B</div>
<div class="t" style="left:656px;top:605px;letter-spacing:0.289px;">0B</div>
<div class="t" style="left:723px;top:605px;letter-spacing:0.688px;">92</div>
<div class="t" style="left:790px;top:605px;letter-spacing:0.688px;">0</div>
<div class="a" style="left:0;top:619px;width:877px;height:15px;background:#fff"></div>
<svg class="a" style="left:73px;top:622px" width="5" height="9"><path d="M0.5 0.5L4.5 4.5L0.5 8.5Z" fill="#555"/></svg>
<div class="t" style="left:83px;top:620px;letter-spacing:0.404px;width:502px;">alloc::raw_vec::RawVec$LT$T$C$A$GT$::with_capacity_in::hef5f88bfa5758fed in ...</div>
<div class="t" style="left:589px;top:620px;letter-spacing:0.289px;">0B</div>
<div class="t" style="left:656px;top:620px;letter-spacing:0.289px;">0B</div>
<div class="t" style="left:723px;top:620px;letter-spacing:0.682px;">144</div>
<div class="t" style="left:790px;top:620px;letter-spacing:0.688px;">0</div>
<div class="a" style="left:0;top:634px;width:877px;height:15px;background:#f7f7f7"></div>
<svg class="a" style="left:73px;top:637px" width="5" height="9"><path d="M0.5 0.5L4.5 4.5L0.5 8.5Z" fill="#555"/></svg>
<div class="t" style="left:83px;top:635px;letter-spacing:0.386px;width:502px;">alloc::raw_vec::RawVec$LT$T$C$A$GT$::with_capacity_in::h33abc49e07ee55cd i...</div>
<div class="t" style="left:589px;top:635px;letter-spacing:0.289px;">0B</div>
<div class="t" style="left:656px;top:635px;letter-spacing:0.289px;">0B</div>
<div class="t" style="left:723px;top:635px;letter-spacing:0.682px;">144</div>
<div class="t" style="left:790px;top:635px;letter-spacing:0.682px;">144</div>
<div class="a" style="left:0;top:649px;width:877px;height:15px;background:#fff"></div>
<svg class="a" style="left:73px;top:652px" width="5" height="9"><path d="M0.5 0.5L4.5 4.5L0.5 8.5Z" fill="#555"/></svg>
<div class="t" style="left:83px;top:650px;letter-spacing:0.394px;width:502px;">alloc::raw_vec::RawVec$LT$T$C$A$GT$::with_capacity_in::hb7781cfd10eda0c2 i...</div>
<div class="t" style="left:589px;top:650px;letter-spacing:0.289px;">0B</div>
<div class="t" style="left:656px;top:650px;letter-spacing:0.289px;">0B</div>
<div class="t" style="left:723px;top:650px;letter-spacing:0.684px;">35344</div>
<div class="t" style="left:790px;top:650px;letter-spacing:0.682px;">176</div>
<div class="a" style="left:0;top:664px;width:877px;height:15px;background:#f7f7f7"></div>
<svg class="a" style="left:73px;top:667px" width="5" height="9"><path d="M0.5 0.5L4.5 4.5L0.5 8.5Z" fill="#555"/></svg>
<div class="t" style="left:83px;top:665px;letter-spacing:0.390px;width:502px;">alloc::raw_vec::RawVec$LT$T$C$A$GT$::with_capacity_in::h3c08a85aec890759 i...</div>
<div class="t" style="left:589px;top:665px;letter-spacing:0.289px;">0B</div>
<div class="t" style="left:656px;top:665px;letter-spacing:0.289px;">0B</div>
<div class="t" style="left:723px;top:665px;letter-spacing:0.688px;">2</div>
<div class="t" style="left:790px;top:665px;letter-spacing:0.688px;">0</div>
<div class="a" style="left:0;top:679px;width:877px;height:15px;background:#fff"></div>
<svg class="a" style="left:73px;top:682px" width="5" height="9"><path d="M0.5 0.5L4.5 4.5L0.5 8.5Z" fill="#555"/></svg>
<div class="t" style="left:83px;top:680px;letter-spacing:0.401px;width:502px;">alloc::raw_vec::RawVec$LT$T$C$A$GT$::with_capacity_in::hce2e89721410ff14 i...</div>
<div class="t" style="left:589px;top:680px;letter-spacing:0.289px;">0B</div>
<div class="t" style="left:656px;top:680px;letter-spacing:0.289px;">0B</div>
<div class="t" style="left:723px;top:680px;letter-spacing:0.688px;">1</div>
<div class="t" style="left:790px;top:680px;letter-spacing:0.688px;">0</div>
<div class="a" style="left:0;top:694px;width:877px;height:15px;background:#f7f7f7"></div>
<svg class="a" style="left:73px;top:697px" width="5" height="9"><path d="M0.5 0.5L4.5 4.5L0.5 8.5Z" fill="#555"/></svg>
<div class="t" style="left:83px;top:695px;letter-spacing:0.391px;width:502px;">alloc::raw_vec::RawVec$LT$T$C$A$GT$::with_capacity_in::hc6b1d9bacbc37698 i...</div>
<div class="t" style="left:589px;top:695px;letter-spacing:0.289px;">0B</div>
<div class="t" style="left:656px;top:695px;letter-spacing:0.289px;">0B</div>
<div class="t" style="left:723px;top:695px;letter-spacing:0.688px;">2</div>
<div class="t" style="left:790px;top:695px;letter-spacing:0.688px;">0</div>
<div class="a" style="left:0;top:709px;width:877px;height:15px;background:#fff"></div>
<svg class="a" style="left:73px;top:712px" width="5" height="9"><path d="M0.5 0.5L4.5 4.5L0.5 8.5Z" fill="#555"/></svg>
<div class="t" style="left:83px;top:710px;letter-spacing:0.403px;width:502px;">alloc::raw_vec::RawVec$LT$T$C$A$GT$::with_capacity_in::h0514b4791b90e362 ...</div>
<div class="t" style="left:589px;top:710px;letter-spacing:0.289px;">0B</div>
<div class="t" style="left:656px;top:710px;letter-spacing:0.289px;">0B</div>
<div class="t" style="left:723px;top:710px;letter-spacing:0.688px;">3</div>
<div class="t" style="left:790px;top:710px;letter-spacing:0.688px;">2</div>
<div class="a" style="left:0;top:724px;width:877px;height:15px;background:#f7f7f7"></div>
<svg class="a" style="left:73px;top:727px" width="5" height="9"><path d="M0.5 0.5L4.5 4.5L0.5 8.5Z" fill="#555"/></svg>
<div class="t" style="left:83px;top:725px;letter-spacing:0.397px;width:502px;">alloc::raw_vec::RawVec$LT$T$C$A$GT$::with_capacity_in::h625cd1c4c08b7f64 i...</div>
<div class="t" style="left:589px;top:725px;letter-spacing:0.289px;">0B</div>
<div class="t" style="left:656px;top:725px;letter-spacing:0.289px;">0B</div>
<div class="t" style="left:723px;top:725px;letter-spacing:0.688px;">3</div>
<div class="t" style="left:790px;top:725px;letter-spacing:0.688px;">1</div>
<div class="a" style="left:0;top:739px;width:877px;height:15px;background:#fff"></div>
<svg class="a" style="left:73px;top:742px" width="5" height="9"><path d="M0.5 0.5L4.5 4.5L0.5 8.5Z" fill="#555"/></svg>
<div class="t" style="left:83px;top:740px;letter-spacing:0.392px;width:502px;">alloc::raw_vec::RawVec$LT$T$C$A$GT$::with_capacity_in::h899ca000dd5b5ca7 i...</div>
<div class="t" style="left:589px;top:740px;letter-spacing:0.289px;">0B</div>
<div class="t" style="left:656px;top:740px;letter-spacing:0.289px;">0B</div>
<div class="t" style="left:723px;top:740px;letter-spacing:0.688px;">2</div>
<div class="t" style="left:790px;top:740px;letter-spacing:0.688px;">0</div>
<div class="a" style="left:0;top:754px;width:877px;height:15px;background:#f7f7f7"></div>
<svg class="a" style="left:73px;top:757px" width="5" height="9"><path d="M0.5 0.5L4.5 4.5L0.5 8.5Z" fill="#555"/></svg>
<div class="t" style="left:83px;top:755px;letter-spacing:0.398px;width:502px;">alloc::raw_vec::RawVec$LT$T$C$A$GT$::with_capacity_in::h9bf6cb0837a1a421 i...</div>
<div class="t" style="left:589px;top:755px;letter-spacing:0.289px;">0B</div>
<div class="t" style="left:656px;top:755px;letter-spacing:0.289px;">0B</div>
<div class="t" style="left:723px;top:755px;letter-spacing:0.684px;">4422</div>
<div class="t" style="left:790px;top:755px;letter-spacing:0.688px;">0</div>
<div class="a" style="left:0;top:769px;width:877px;height:15px;background:#fff"></div>
<svg class="a" style="left:73px;top:772px" width="5" height="9"><path d="M0.5 0.5L4.5 4.5L0.5 8.5Z" fill="#555"/></svg>
<div class="t" style="left:83px;top:770px;letter-spacing:0.403px;width:502px;">alloc::raw_vec::RawVec$LT$T$C$A$GT$::with_capacity_in::h7de5e0d3f064d1b7 i...</div>
<div class="t" style="left:589px;top:770px;letter-spacing:0.289px;">0B</div>
<div class="t" style="left:656px;top:770px;letter-spacing:0.289px;">0B</div>
<div class="t" style="left:723px;top:770px;letter-spacing:0.688px;">2</div>
<div class="t" style="left:790px;top:770px;letter-spacing:0.688px;">0</div>
<div class="a" style="left:877px;top:0;width:14px;height:776px;background:#e3e3e3;border-left:1px solid #c4c4c4"></div>
<div class="a" style="left:877px;top:0;width:14px;height:14px;background:linear-gradient(#fdfdfd,#ececec);border-left:1px solid #c4c4c4;border-bottom:1px solid #c4c4c4"></div>
<svg class="a" style="left:880px;top:3px" width="8" height="5"><path d="M0 4.5L4 0.5L8 4.5Z" fill="#555"/></svg>
<div class="a" style="left:877px;top:14px;width:14px;height:31px;background:linear-gradient(90deg,#fafafa,#efefef);border-left:1px solid #c4c4c4;border-bottom:1px solid #c4c4c4"></div>
<div class="a" style="left:877px;top:762px;width:14px;height:14px;background:linear-gradient(#fdfdfd,#ececec);border-left:1px solid #c4c4c4;border-top:1px solid #c4c4c4"></div>
<svg class="a" style="left:880px;top:767px" width="8" height="5"><path d="M0 0.5L8 0.5L4 4.5Z" fill="#555"/></svg>
</div>
<div class="t" style="left:931px;top:50px;letter-spacing:0.426px;height:16px;line-height:16px;">S&amp;tacks</div>
<div class="t" style="left:936px;top:81px;letter-spacing:0.417px;height:16px;line-height:16px;">Selected Stack:</div>
<div class="a" style="left:1136px;top:77px;width:193px;height:22px;border:1px solid #aaa;border-radius:3px;background:#fff"></div>
<div class="a" style="left:1314px;top:78px;width:1px;height:20px;background:#c8c8c8"></div>
<svg class="a" style="left:1317px;top:82px" width="8" height="12"><path d="M0 4L4 0L8 4Z M0 8L8 8L4 12Z" fill="#aaa"/></svg>
<div class="t" style="left:1141px;top:81px;letter-spacing:0.525px;height:16px;line-height:16px;">1 / 1</div>
<div class="a" style="left:936px;top:106px;width:393px;height:786px;border:1px solid #aaa;background:#fff;overflow:hidden">
<div class="a" style="left:0;top:0;width:377px;height:19px;background:linear-gradient(#f8f8f8,#eaeaea);border-bottom:1px solid #bdbdbd"></div>
<div class="t" style="left:3px;top:3px;letter-spacing:0.502px;">Backtrace</div>
<div class="t" style="left:3px;top:20px;letter-spacing:0.444px;width:374px;">std::sys::alloc::unix::_$LT$impl$u20$core..alloc..global..Glo...</div>
<div class="t" style="left:3px;top:35px;letter-spacing:0.148px;width:374px;">_RNvCscSpY9Juk0HT_7___rustc11___rdl_alloc in rolldown-bi...</div>
<div class="t" style="left:3px;top:50px;letter-spacing:0.550px;width:374px;">alloc::alloc::alloc::h60805bf082d8ffe1 in rolldown-binding.li...</div>
<div class="t" style="left:3px;top:65px;letter-spacing:0.504px;width:374px;">alloc::alloc::Global::alloc_impl::he6a4e0c4f7f70b19 in rolld...</div>
<div class="t" style="left:3px;top:80px;letter-spacing:0.399px;width:374px;">_$LT$alloc..alloc..Global$u20$as$u20$core..alloc..Allocator...</div>
<div class="t" style="left:3px;top:95px;letter-spacing:0.357px;width:374px;">alloc::raw_vec::RawVecInner$LT$A$GT$::try_allocate_in::he...</div>
<div class="t" style="left:3px;top:110px;letter-spacing:0.359px;width:374px;">alloc::raw_vec::RawVecInner$LT$A$GT$::with_capacity_in::...</div>
<div class="t" style="left:3px;top:125px;letter-spacing:0.328px;width:374px;">alloc::raw_vec::RawVec$LT$T$C$A$GT$::with_capacity_in::...</div>
<div class="t" style="left:3px;top:140px;letter-spacing:0.388px;width:374px;">alloc::vec::Vec$LT$T$C$A$GT$::with_capacity_in::h258b58...</div>
<div class="t" style="left:3px;top:155px;letter-spacing:0.419px;width:374px;">_$LT$T$u20$as$u20$alloc..slice..$LT$impl$u20$$u5b$T$u...</div>
<div class="t" style="left:3px;top:170px;letter-spacing:0.415px;width:374px;">alloc::slice::_$LT$impl$u20$$u5b$T$u5d$$GT$::to_vec_in::...</div>
<div class="t" style="left:3px;top:185px;letter-spacing:0.298px;width:374px;">_$LT$alloc..vec..Vec$LT$T$C$A$GT$$u20$as$u20$core..clo...</div>
<div class="t" style="left:3px;top:200px;letter-spacing:0.401px;width:374px;">_$LT$rolldown_common..types..str_or_bytes..StrOrBytes$u...</div>
<div class="t" style="left:3px;top:215px;letter-spacing:0.484px;width:374px;">_$LT$rolldown_common..types..output..OutputAsset$u20$a...</div>
<div class="t" style="left:3px;top:230px;letter-spacing:0.373px;width:374px;">_$LT$T$u20$as$u20$core..clone..uninit..CopySpec$GT$::cl...</div>
<div class="t" style="left:3px;top:245px;letter-spacing:0.352px;width:374px;">_$LT$T$u20$as$u20$core..clone..CloneToUninit$GT$::clone...</div>
<div class="t" style="left:3px;top:260px;letter-spacing:0.302px;width:374px;">_$LT$alloc..boxed..Box$LT$T$C$A$GT$$u20$as$u20$core.....</div>
<div class="t" style="left:3px;top:275px;letter-spacing:0.501px;width:374px;">_$LT$rolldown_common..types..output..Output$u20$as$u2...</div>
<div class="t" style="left:3px;top:290px;letter-spacing:0.419px;width:374px;">_$LT$T$u20$as$u20$alloc..slice..$LT$impl$u20$$u5b$T$u...</div>
<div class="t" style="left:3px;top:305px;letter-spacing:0.415px;width:374px;">alloc::slice::_$LT$impl$u20$$u5b$T$u5d$$GT$::to_vec_in::...</div>
<div class="t" style="left:3px;top:320px;letter-spacing:0.298px;width:374px;">_$LT$alloc..vec..Vec$LT$T$C$A$GT$$u20$as$u20$core..clo...</div>
<div class="t" style="left:3px;top:335px;letter-spacing:0.346px;width:374px;">_$LT$rolldown_binding..options..plugin..js_plugin..JsPlugin$...</div>
<div class="t" style="left:3px;top:350px;letter-spacing:0.425px;width:374px;">_$LT$T$u20$as$u20$rolldown_plugin..pluginable..Pluginabl...</div>
<div class="t" style="left:3px;top:365px;letter-spacing:0.338px;width:374px;">_$LT$core..pin..Pin$LT$P$GT$$u20$as$u20$core..future..fu...</div>
<div class="t" style="left:3px;top:380px;letter-spacing:0.446px;width:374px;">_$LT$tracing..instrument..Instrumented$LT$T$GT$$u20$as...</div>
<div class="t" style="left:3px;top:395px;letter-spacing:0.465px;width:374px;">rolldown_plugin::plugin_driver::output_hooks::_$LT$impl$u...</div>
<div class="t" style="left:3px;top:410px;letter-spacing:0.505px;width:374px;">rolldown::bundler::Bundler::bundle_up::_$u7b$$u7b$closur...</div>
<div class="t" style="left:3px;top:425px;letter-spacing:0.520px;width:374px;">rolldown::bundler::Bundler::bundle_write::_$u7b$$u7b$clos...</div>
<div class="t" style="left:3px;top:440px;letter-spacing:0.545px;width:374px;">rolldown::bundler::Bundler::write::_$u7b$$u7b$closure$u7...</div>
<div class="t" style="left:3px;top:455px;letter-spacing:0.446px;width:374px;">_$LT$tracing..instrument..Instrumented$LT$T$GT$$u20$as...</div>
<div class="t" style="left:3px;top:470px;letter-spacing:0.545px;width:374px;">rolldown::bundler::Bundler::write::_$u7b$$u7b$closure$u7...</div>
<div class="t" style="left:3px;top:485px;letter-spacing:0.545px;width:374px;">rolldown::bundler::Bundler::write::_$u7b$$u7b$closure$u7...</div>
<div class="t" style="left:3px;top:500px;letter-spacing:0.506px;width:374px;">rolldown_binding::binding_bundler_impl::BindingBundlerIm...</div>
<div class="t" style="left:3px;top:515px;letter-spacing:0.506px;width:374px;">rolldown_binding::binding_bundler_impl::BindingBundlerIm...</div>
<div class="t" style="left:3px;top:530px;letter-spacing:0.506px;width:374px;">rolldown_binding::binding_bundler_impl::BindingBundlerIm...</div>
<div class="t" style="left:3px;top:545px;letter-spacing:0.425px;width:374px;">rolldown_binding::binding_bundler_impl::__napi_impl_helpe...</div>
<div class="t" style="left:3px;top:560px;letter-spacing:0.515px;width:374px;">napi::tokio_runtime::execute_tokio_future::_$u7b$$u7b$clo...</div>
<div class="t" style="left:3px;top:575px;letter-spacing:0.410px;width:374px;">tokio::runtime::task::core::Core$LT$T$C$S$GT$::poll::_$u7...</div>
<div class="t" style="left:3px;top:590px;letter-spacing:0.406px;width:374px;">tokio::loom::std::unsafe_cell::UnsafeCell$LT$T$GT$::with_m...</div>
<div class="t" style="left:3px;top:605px;letter-spacing:0.437px;width:374px;">tokio::runtime::task::core::Core$LT$T$C$S$GT$::poll::hd35...</div>
<div class="t" style="left:3px;top:620px;letter-spacing:0.535px;width:374px;">tokio::runtime::task::harness::poll_future::_$u7b$$u7b$clos...</div>
<div class="t" style="left:3px;top:635px;letter-spacing:0.279px;width:374px;">_$LT$core..panic..unwind_safe..AssertUnwindSafe$LT$F$GT...</div>
<div class="t" style="left:3px;top:650px;letter-spacing:0.530px;width:374px;">std::panicking::try::do_call::h121880f2dc08aac7 in rolldow...</div>
<div class="t" style="left:3px;top:665px;letter-spacing:0.590px;width:374px;">std::panicking::try::h70707972d4422542 in rolldown-bindin...</div>
<div class="t" style="left:3px;top:680px;letter-spacing:0.552px;width:374px;">std::panic::catch_unwind::hbf8d1d55deb12fc5 in rolldown-...</div>
<div class="t" style="left:3px;top:695px;letter-spacing:0.569px;width:374px;">tokio::runtime::task::harness::poll_future::hac0dd72af290b...</div>
<div class="t" style="left:3px;top:710px;letter-spacing:0.413px;width:374px;">tokio::runtime::task::harness::Harness$LT$T$C$S$GT$::poll...</div>
<div class="t" style="left:3px;top:725px;letter-spacing:0.413px;width:374px;">tokio::runtime::task::harness::Harness$LT$T$C$S$GT$::poll...</div>
<div class="t" style="left:3px;top:740px;letter-spacing:0.582px;width:374px;">tokio::runtime::task::raw::poll::h5aa9a3c26305e103 in rolld...</div>
<div class="t" style="left:3px;top:755px;letter-spacing:0.536px;width:374px;">tokio::runtime::task::raw::RawTask::poll::h1725331c56cc06...</div>
<div class="t" style="left:3px;top:770px;letter-spacing:0.489px;width:374px;">tokio::runtime::task::LocalNotified$LT$S$GT$::run::h86268...</div>
<div class="a" style="left:377px;top:0;width:14px;height:784px;background:#e3e3e3;border-left:1px solid #c4c4c4"></div>
<div class="a" style="left:377px;top:0;width:14px;height:14px;background:linear-gradient(#fdfdfd,#ececec);border-left:1px solid #c4c4c4;border-bottom:1px solid #c4c4c4"></div>
<svg class="a" style="left:380px;top:3px" width="8" height="5"><path d="M0 4.5L4 0.5L8 4.5Z" fill="#555"/></svg>
<div class="a" style="left:377px;top:14px;width:14px;height:399px;background:linear-gradient(90deg,#fafafa,#efefef);border-left:1px solid #c4c4c4;border-bottom:1px solid #c4c4c4"></div>
<div class="a" style="left:377px;top:771px;width:14px;height:13px;background:linear-gradient(#fdfdfd,#ececec);border-left:1px solid #c4c4c4;border-top:1px solid #c4c4c4"></div>
<svg class="a" style="left:380px;top:776px" width="8" height="5"><path d="M0 0.5L8 0.5L4 4.5Z" fill="#555"/></svg>
</div>
<div class="a" style="left:924px;top:468px;width:1px;height:1px;background:#a8a8a8"></div>
<div class="a" style="left:924px;top:471px;width:1px;height:1px;background:#a8a8a8"></div>
<div class="a" style="left:924px;top:474px;width:1px;height:1px;background:#a8a8a8"></div>
<div class="a" style="left:924px;top:477px;width:1px;height:1px;background:#a8a8a8"></div>
<div class="a" style="left:924px;top:480px;width:1px;height:1px;background:#a8a8a8"></div>
<div class="a" style="left:924px;top:483px;width:1px;height:1px;background:#a8a8a8"></div>
<div class="a" style="left:1335px;top:912px;width:1px;height:1px;background:#b0b0b0"></div>
<div class="a" style="left:1332px;top:915px;width:1px;height:1px;background:#b0b0b0"></div>
<div class="a" style="left:1335px;top:915px;width:1px;height:1px;background:#b0b0b0"></div>
<div class="a" style="left:1329px;top:918px;width:1px;height:1px;background:#b0b0b0"></div>
<div class="a" style="left:1332px;top:918px;width:1px;height:1px;background:#b0b0b0"></div>
<div class="a" style="left:1335px;top:918px;width:1px;height:1px;background:#b0b0b0"></div>
<div class="a" style="left:1326px;top:921px;width:1px;height:1px;background:#b0b0b0"></div>
<div class="a" style="left:1329px;top:921px;width:1px;height:1px;background:#b0b0b0"></div>
<div class="a" style="left:1332px;top:921px;width:1px;height:1px;background:#b0b0b0"></div>
<div class="a" style="left:1335px;top:921px;width:1px;height:1px;background:#b0b0b0"></div>
</body></html>
